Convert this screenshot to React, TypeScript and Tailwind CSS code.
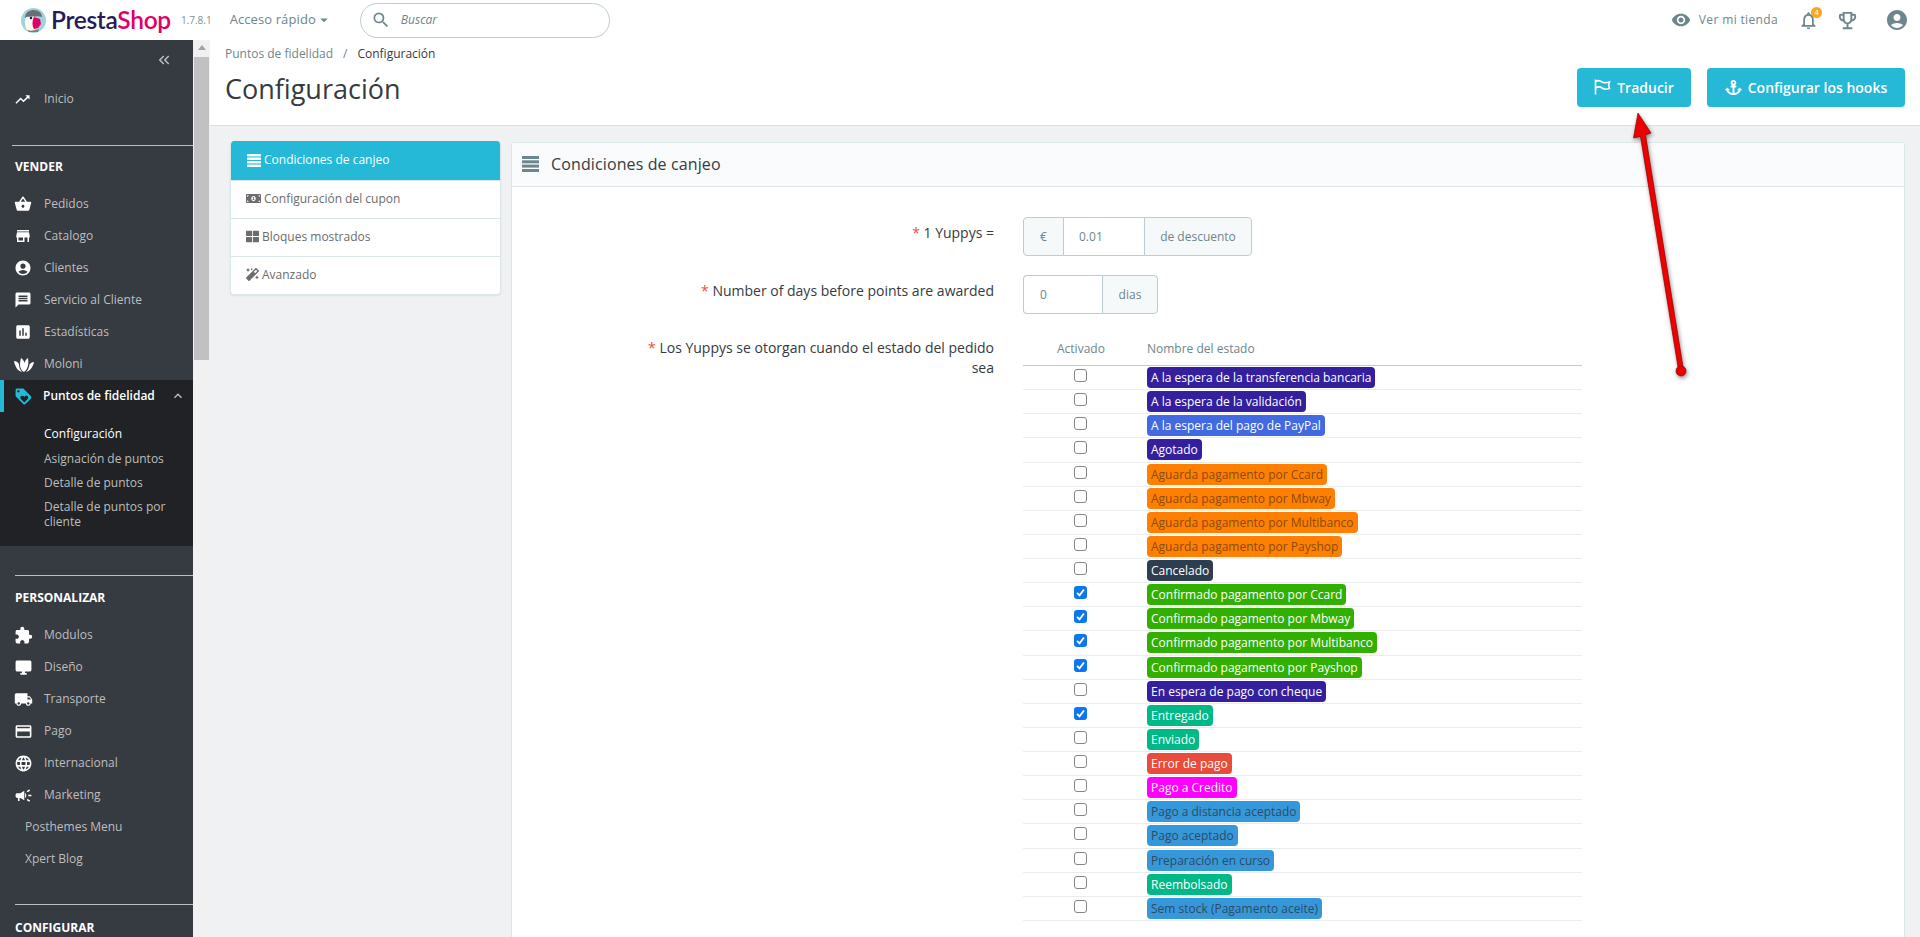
import React from "react";
import {
  MdTrendingUp, MdShoppingBasket, MdStore, MdAccountCircle, MdMessage, MdAssessment, MdLoyalty,
  MdExpandLess, MdExtension, MdDesktopWindows, MdLocalShipping, MdPayment, MdLanguage, MdVisibility,
  MdNotificationsNone, MdOutlineEmojiEvents, MdSearch, MdArrowDropDown, MdKeyboardDoubleArrowLeft, MdCampaign,
} from "react-icons/md";
import { FaMoneyBillAlt, FaThLarge, FaMagic, FaAnchor } from "react-icons/fa";

const font = { fontFamily: '"Open Sans", sans-serif' };

function Lines({ w, h, className }: { w: number; h: number; className?: string }) {
  return (
    <svg width={w} height={h} viewBox="0 0 17 16" fill="currentColor" className={className}>
      <rect x="0" y="0" width="17" height="3" />
      <rect x="0" y="4.300" width="17" height="3" />
      <rect x="0" y="8.600" width="17" height="3" />
      <rect x="0" y="13" width="17" height="3" />
    </svg>
  );
}

function Lotus() {
  return (
    <svg width="20" height="18" viewBox="0 0 20 18" fill="#fff">
      <path d="M10 17C6 15 5 10 7 3c2 1 3 3 3.500 5C11 6 12 4 14 3c1 6 0 11-4 14Z" />
      <path d="M8 17C4 16 1 12 0 6c2 0 4 1 5 3 0 3 1 6 3 8Z" />
      <path d="M12 17c4-1 7-5 8-10-2 0-3.500 1-4.500 2.500-.5 3-1.500 5.500-3.500 7.500Z" />
    </svg>
  );
}

function Puffin() {
  return (
    <svg width="25" height="25" viewBox="0 0 25 25">
      <circle cx="12.500" cy="12.500" r="12.500" fill="#9fd3dc" />
      <path d="M4 10C4 4 9 2 13 2c5 0 8 3 8 7-3-1-6-1-8 0-3 1-6 1-9 1Z" fill="#6b6f75" />
      <path d="M5 9c3 0 7-1 9 0 3 2 3 7 1 11-2 3-6 4-9 2-2-3-3-9-1-13Z" fill="#fbf7f1" />
      <circle cx="10" cy="10" r="1.300" fill="#251b5b" />
      <path d="M13 9l6 2 1 5-3 4-4 1c-2-3-2-8 0-12Z" fill="#df0067" />
      <path d="M6 22c3 1 8 1 12-1l-1 3H8Z" fill="#8c7a64" />
    </svg>
  );
}

function FlagIcon() {
  return (
    <svg width="17" height="16" viewBox="0 0 17 16" fill="none" stroke="#fff" strokeWidth="1.600">
      <path d="M1.500 0.500V15.500" />
      <path d="M1.500 2.500C4 1 6 1.500 8 3c2 1 4 1 7.500 0-1 2-1 4 0 6.500-3 1-5.500 1-7.500-.5-2-1.500-4-1.500-6.500 0" />
    </svg>
  );
}

type NavItem = { label: string; icon?: React.ReactNode };

function Nav({ label, icon }: NavItem) {
  return (
    <div className="flex h-8 items-center text-[12px] text-[#bebebe]">
      {icon ? (
        <>
          <span className="ml-[14px] flex w-[30px] items-center text-white">{icon}</span>
          <span>{label}</span>
        </>
      ) : (
        <span className="ml-[25px]">{label}</span>
      )}
    </div>
  );
}

function Section({ label }: { label: string }) {
  return <div className="ml-[15px] flex items-center text-[12px] font-bold text-white">{label}</div>;
}

const statuses: [string, string, string, boolean][] = [
  ["A la espera de la transferencia bancaria", "bg-[#34209e]", "text-white", false],
  ["A la espera de la validación", "bg-[#34209e]", "text-white", false],
  ["A la espera del pago de PayPal", "bg-[#4169e1]", "text-white", false],
  ["Agotado", "bg-[#34209e]", "text-white", false],
  ["Aguarda pagamento por Ccard", "bg-[#ff8000]", "text-[#8a4a10]", false],
  ["Aguarda pagamento por Mbway", "bg-[#ff8000]", "text-[#8a4a10]", false],
  ["Aguarda pagamento por Multibanco", "bg-[#ff8000]", "text-[#8a4a10]", false],
  ["Aguarda pagamento por Payshop", "bg-[#ff8000]", "text-[#8a4a10]", false],
  ["Cancelado", "bg-[#2c3e50]", "text-white", false],
  ["Confirmado pagamento por Ccard", "bg-[#32b000]", "text-white", true],
  ["Confirmado pagamento por Mbway", "bg-[#32b000]", "text-white", true],
  ["Confirmado pagamento por Multibanco", "bg-[#32b000]", "text-white", true],
  ["Confirmado pagamento por Payshop", "bg-[#32b000]", "text-white", true],
  ["En espera de pago con cheque", "bg-[#34209e]", "text-white", false],
  ["Entregado", "bg-[#01b887]", "text-white", true],
  ["Enviado", "bg-[#01b887]", "text-white", false],
  ["Error de pago", "bg-[#e74c3c]", "text-white", false],
  ["Pago a Credito", "bg-[#ff00ff]", "text-white", false],
  ["Pago a distancia aceptado", "bg-[#3498db]", "text-[#34495e]", false],
  ["Pago aceptado", "bg-[#3498db]", "text-[#34495e]", false],
  ["Preparación en curso", "bg-[#3498db]", "text-[#34495e]", false],
  ["Reembolsado", "bg-[#01b887]", "text-white", false],
  ["Sem stock (Pagamento aceite)", "bg-[#3498db]", "text-[#34495e]", false],
];

function Tab({ icon, label, active }: { icon: React.ReactNode; label: string; active?: boolean }) {
  return (
    <div
      className={
        active
          ? "flex h-[39px] items-center gap-[2px] bg-[#25b9d7] pb-[1px] pl-[15px] text-[12px] text-white"
          : "flex h-[38px] items-center gap-[3px] border-t border-[#dbe6e9] pb-[2px] pl-[15px] text-[12px] text-[#6c6c6c]"
      }
    >
      {icon}
      <span>{label}</span>
    </div>
  );
}

function CheckBox({ checked }: { checked: boolean }) {
  return checked ? (
    <span className="flex h-[13px] w-[13px] items-center justify-center rounded-[3px] bg-[#0b76ef]">
      <svg width="11" height="11" viewBox="0 0 11 11" fill="none" stroke="#fff" strokeWidth="1.900">
        <path d="M2 5.800 4.500 8.300 9 2.500" />
      </svg>
    </span>
  ) : (
    <span className="block h-[13px] w-[13px] rounded-[3px] border border-[#858585] bg-white" />
  );
}

export default function App() {
  return (
    <div className="relative flex h-[937px] flex-col overflow-hidden bg-[#eff1f2]" style={font}>
      <header className="flex h-10 shrink-0 items-center bg-white">
        <div className="ml-[21px] flex"><Puffin /></div>
        <span className="ml-[5px] text-[24.500px] font-semibold leading-none tracking-[-0.3px] text-[#251b5b]" style={{ fontFamily: "Lato, sans-serif" }}>
          Presta<span className="text-[#df0067]">Shop</span>
        </span>
        <span className="ml-[10px] text-[10px] text-[#7d8f95]">1.7.8.1</span>
        <span className="ml-[18px] flex items-center text-[13px] tracking-[0.1px] text-[#6c868e]">
          Acceso rápido<MdArrowDropDown size={18} className="-ml-[1px]" />
        </span>
        <div className="ml-[27px] flex h-[35px] w-[250px] items-center rounded-full border border-[#bbcdd2] pl-[10px]">
          <MdSearch size={20} className="text-[#6c868e]" />
          <span className="ml-[10px] text-[12px] italic text-[#6c868e]">Buscar</span>
        </div>
        <div className="ml-auto flex items-center text-[#6c868e]">
          <MdVisibility size={20} />
          <span className="ml-[8px] text-[12px] tracking-[0.35px]">Ver mi tienda</span>
          <span className="relative ml-[20px] flex">
            <MdNotificationsNone size={21} />
            <span className="absolute -right-[3px] -top-[3px] flex h-[11px] w-[11px] items-center justify-center rounded-full bg-[#f5a623] text-[8px] text-white">4</span>
          </span>
          <span className="ml-[17px] flex"><MdOutlineEmojiEvents size={23} /></span>
          <span className="ml-[26px] mr-[11px] flex"><MdAccountCircle size={24} /></span>
        </div>
      </header>

      <div className="flex min-h-0 flex-1">
        <aside className="w-[193px] shrink-0 overflow-hidden bg-[#363a41]">
          <div className="mb-[3px] flex h-10 items-center justify-end pr-[20px] text-[#bebebe]">
            <MdKeyboardDoubleArrowLeft size={18} />
          </div>
          <Nav label="Inicio" icon={<MdTrendingUp size={17} />} />
          <div className="ml-[12px] mt-[30px] border-t border-[#bebebe]" />
          <div className="flex h-[42px]"><Section label="VENDER" /></div>
          <Nav label="Pedidos" icon={<MdShoppingBasket size={18} />} />
          <Nav label="Catalogo" icon={<MdStore size={18} />} />
          <Nav label="Clientes" icon={<MdAccountCircle size={18} />} />
          <Nav label="Servicio al Cliente" icon={<MdMessage size={18} />} />
          <Nav label="Estadísticas" icon={<MdAssessment size={18} />} />
          <Nav label="Moloni" icon={<Lotus />} />
          <div className="h-[166px] bg-[#202226]">
            <div className="flex h-8 items-center border-l-4 border-[#25b9d7] text-[12px] font-semibold text-white">
              <span className="ml-[10px] flex w-[29px] text-[#25b9d7]"><MdLoyalty size={19} /></span>
              <span>Puntos de fidelidad</span>
              <MdExpandLess size={16} className="ml-[15px] text-[#bebebe]" />
            </div>
            <div className="ml-[44px] mr-[20px] mt-[10px] text-[12px] text-[#bebebe]">
              <div className="flex h-[24.500px] items-center text-white">Configuración</div>
              <div className="flex h-[24.500px] items-center">Asignación de puntos</div>
              <div className="flex h-[24.500px] items-center">Detalle de puntos</div>
              <div className="mt-[3px] leading-[15px]">Detalle de puntos por cliente</div>
            </div>
          </div>
          <div className="ml-[15px] mt-[29px] border-t border-[#bebebe]" />
          <div className="flex h-[42px] pt-[2px]"><Section label="PERSONALIZAR" /></div>
          <div className="h-px" />
          <Nav label="Modulos" icon={<MdExtension size={19} />} />
          <Nav label="Diseño" icon={<MdDesktopWindows size={19} />} />
          <Nav label="Transporte" icon={<MdLocalShipping size={19} />} />
          <Nav label="Pago" icon={<MdPayment size={19} />} />
          <Nav label="Internacional" icon={<MdLanguage size={19} />} />
          <Nav label="Marketing" icon={<MdCampaign size={19} />} />
          <Nav label="Posthemes Menu" />
          <Nav label="Xpert Blog" />
          <div className="ml-[15px] mt-[29px] border-t border-[#bebebe]" />
          <div className="flex h-[44px] pt-[2px]"><Section label="CONFIGURAR" /></div>
        </aside>

        <div className="flex w-[17px] shrink-0 flex-col items-center bg-[#f1f1f1]">
          <span className="mt-[5px] h-0 w-0 border-x-[4px] border-b-[5px] border-x-transparent border-b-[#a3a3a3]" />
          <span className="mt-[7px] h-[303px] w-[15px] bg-[#c1c1c1]" />
        </div>

        <main className="min-w-0 flex-1">
          <div className="flex h-[86px] border-b border-[#dfdfdf] bg-white pl-[15px] pr-[15px]">
            <div>
              <div className="mt-[6px] text-[12px] leading-[16px] text-[#6c868e]">
                Puntos de fidelidad<span className="mx-[10px]">/</span><span className="text-[#363a41]">Configuración</span>
              </div>
              <h1 className="mt-[8px] text-[27px] font-normal leading-[38px] text-[#363a41]">Configuración</h1>
            </div>
            <div className="ml-auto mt-[28px] flex h-[39px] gap-4">
              <div className="flex w-[114px] items-center justify-center gap-[6px] rounded-[4px] bg-[#25b9d7] pb-[1px] text-[14px] font-semibold text-white">
                <FlagIcon />Traducir
              </div>
              <div className="flex w-[198px] items-center justify-center gap-[6px] rounded-[4px] bg-[#25b9d7] pb-[1px] text-[14px] font-semibold text-white">
                <FaAnchor size={17} />Configurar los hooks
              </div>
            </div>
          </div>

          <div className="flex items-start pl-5 pr-[15px] pt-[15px]">
            <div className="w-[271px] shrink-0 overflow-hidden rounded-[4px] border border-[#dbe6e9] border-t-0 bg-white shadow-[0_1px_2px_rgba(0,0,0,0.08)]">
              <Tab active icon={<Lines w={16} h={13} />} label="Condiciones de canjeo" />
              <Tab icon={<FaMoneyBillAlt size={15} />} label="Configuración del cupon" />
              <Tab icon={<FaThLarge size={13} />} label="Bloques mostrados" />
              <Tab icon={<FaMagic size={13} />} label="Avanzado" />
            </div>

            <section className="ml-[10px] mt-px min-w-0 flex-1 rounded-t-[4px] border border-b-0 border-[#dbe6e9] bg-white pb-[60px]">
              <div className="flex h-[44px] items-center border-b border-[#dbe6e9] bg-[#fafbfc] pb-[1px] pl-2 text-[16px] font-medium tracking-[0.12px] text-[#363a41]">
                <Lines w={21} h={16} className="mr-[10px] text-[#6c868e]" />
                Condiciones de canjeo
              </div>
              <div className="pt-[30px] text-[14px] text-[#363a41]">
                <div className="flex">
                  <div className="w-[482px] pt-[6px] text-right leading-[20px]"><span className="text-[#f54c3e]">* </span>1 Yuppys =</div>
                  <div className="ml-[29px] flex h-[39px] text-[12px] text-[#6c868e]">
                    <span className="flex w-[41px] items-center justify-center rounded-l-[4px] border border-[#bbcdd2] bg-[#f6f9f9]">€</span>
                    <span className="flex w-[80px] items-center border-y border-[#bbcdd2] pl-[15px]">0.01</span>
                    <span className="flex w-[108px] items-center justify-center rounded-r-[4px] border border-[#bbcdd2] bg-[#f6f9f9]">de descuento</span>
                  </div>
                </div>
                <div className="mt-[19px] flex">
                  <div className="w-[482px] pt-[6px] text-right leading-[20px]"><span className="text-[#f54c3e]">* </span>Number of days before points are awarded</div>
                  <div className="ml-[29px] flex h-[39px] text-[12px] text-[#6c868e]">
                    <span className="flex w-[79px] items-center rounded-l-[4px] border border-r-0 border-[#bbcdd2] pl-[16px]">0</span>
                    <span className="flex w-[56px] items-center justify-center rounded-r-[4px] border border-[#bbcdd2] bg-[#f6f9f9]">dias</span>
                  </div>
                </div>
                <div className="mt-[24px] flex">
                  <div className="w-[482px] pl-[120px] text-right leading-[20px]"><span className="text-[#f54c3e]">* </span>Los Yuppys se otorgan cuando el estado del pedido sea</div>
                  <div className="ml-[29px] w-[559px]">
                    <div className="flex h-[28px] items-start border-b border-[#bbcdd2] pt-[3px] text-[12px] leading-[16px] text-[#6c868e]">
                      <span className="w-[124px] pl-[34px]">Activado</span>
                      <span>Nombre del estado</span>
                    </div>
                    {statuses.map(([label, bg, fg, checked]) => (
                      <div key={label} className="flex h-[24.130px] items-center border-b border-[#eaedee]">
                        <span className="flex w-[114px] justify-center pb-[4px]"><CheckBox checked={checked} /></span>
                        <span className={`ml-[10px] rounded-[4px] px-1 text-[12px] leading-[21px] ${bg} ${fg}`}>{label}</span>
                      </div>
                    ))}
                  </div>
                </div>
              </div>
            </section>
          </div>
        </main>
      </div>

      <svg className="pointer-events-none absolute left-[1630px] top-[110px] drop-shadow-[1px_2px_2px_rgba(0,0,0,0.45)]" width="60" height="272" viewBox="0 0 60 272">
        <path d="M8 3 3.500 28l7-1.500 38 233.500h5L15.500 25l5.500-2Z" fill="#ee0000" stroke="#8a0000" strokeWidth="0.700" />
        <circle cx="51" cy="261" r="5" fill="#e80000" stroke="#8a0000" strokeWidth="0.700" />
      </svg>
    </div>
  );
}
